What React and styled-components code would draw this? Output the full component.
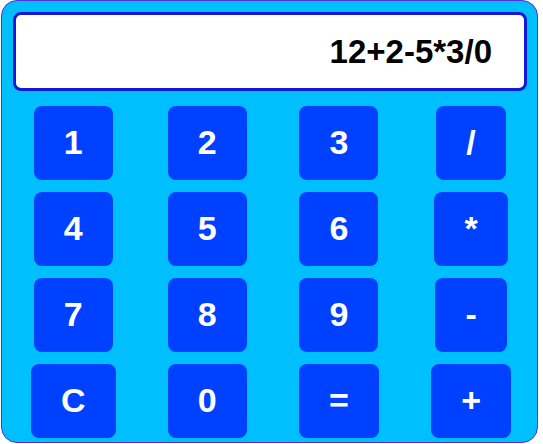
import React, { useState } from "react";
import styled, { createGlobalStyle } from "styled-components";

const GlobalStyle = createGlobalStyle`
  body {
    margin: 0;
    font-family: "Liberation Sans", Arial, sans-serif;
    background: #ffffff;
  }
`;

const keys = ["1", "2", "3", "/", "4", "5", "6", "*", "7", "8", "9", "-", "C", "0", "=", "+"];

const Calculator = styled.div`
  box-sizing: border-box;
  width: 537px;
  margin-left: 1px;
  padding: 11px 10px 4px 11px;
  background: #00bfff;
  border: 1px solid #5a2fd6;
  border-radius: 16px;
`;

const Display = styled.div`
  box-sizing: border-box;
  height: 79px;
  padding: 0 32px 0 31px;
  display: flex;
  align-items: center;
  justify-content: flex-end;
  background: #ffffff;
  border: 3px solid #1717d9;
  border-radius: 8px;
  color: #000000;
  font-size: 33px;
  font-weight: 700;
`;

const Keypad = styled.div`
  display: grid;
  grid-template-columns: repeat(4, auto);
  justify-content: space-between;
  justify-items: center;
  row-gap: 12px;
  margin-top: 15px;
  padding: 0 16px 0 18px;
`;

const Key = styled.button`
  padding: 17px 30px 18px;
  border: none;
  border-radius: 8px;
  background: #0040ff;
  color: #ffffff;
  font-family: "Liberation Sans", Arial, sans-serif;
  font-size: 34px;
  font-weight: 700;
  line-height: normal;
  cursor: pointer;
`;

export default function App() {
  const [value, setValue] = useState("12+2-5*3/0");

  const press = (k) => {
    if (k === "C") return setValue("");
    if (k === "=") {
      try {
        // eslint-disable-next-line no-new-func
        const r = Function(`return (${value})`)();
        setValue(String(r));
      } catch (e) {
        setValue("Error");
      }
      return;
    }
    setValue((v) => v + k);
  };

  return (
    <>
      <GlobalStyle />
      <Calculator>
        <Display>{value}</Display>
        <Keypad>
          {keys.map((k) => (
            <Key key={k} onClick={() => press(k)}>
              {k}
            </Key>
          ))}
        </Keypad>
      </Calculator>
    </>
  );
}
